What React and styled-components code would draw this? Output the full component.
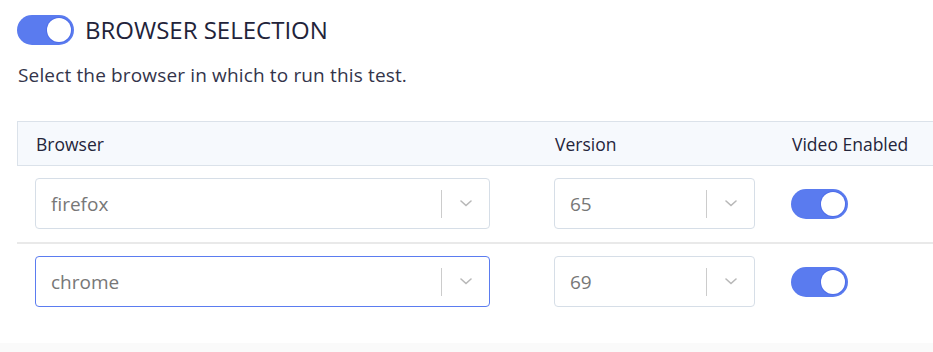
import React from "react";
import styled, { createGlobalStyle } from "styled-components";

const GlobalStyle = createGlobalStyle`
  html, body {
    margin: 0;
    padding: 0;
    background: #fff;
    font-family: "Open Sans", "Noto Sans", sans-serif;
  }
`;

const Page = styled.div`
  width: 933px;
  height: 352px;
  overflow: hidden;
  display: flex;
  flex-direction: column;
`;

const Content = styled.div`
  padding: 14px 0 0 17px;
  flex: 1;
`;

const TitleRow = styled.div`
  display: flex;
  align-items: center;
  gap: 11px;
  height: 32px;
`;

const Title = styled.h2`
  margin: 0;
  font-size: 24px;
  line-height: 32px;
  font-weight: 500;
  color: #22233a;
`;

const Subtitle = styled.p`
  margin: 16px 0 0 1px;
  font-size: 19px;
  line-height: 26px;
  letter-spacing: 0.15px;
  color: #33344a;
`;

const SwitchTrack = styled.div`
  width: 57px;
  height: 30px;
  border-radius: 15px;
  background: #5a7bef;
  display: flex;
  align-items: center;
  justify-content: ${(p) => (p.on ? "flex-end" : "flex-start")};
  padding: 0 3px;
  box-sizing: border-box;
  flex-shrink: 0;
`;

const SwitchKnob = styled.div`
  width: 24px;
  height: 24px;
  border-radius: 50%;
  background: #fff;
  box-shadow: 0 0 0 1px rgba(70, 100, 230, 0.6);
`;

const Table = styled.div`
  margin-top: 33px;
`;

const HeaderRow = styled.div`
  display: grid;
  grid-template-columns: 519px 237px 1fr;
  height: 43px;
  align-items: center;
  background: #f6f9fd;
  border: 1px solid #dbe2ea;
  border-right: none;
`;

const HeaderCell = styled.div`
  padding-left: 18px;
  font-size: 17.5px;
  color: #24253b;
`;

const Row = styled.div`
  display: grid;
  grid-template-columns: 519px 237px 1fr;
  align-items: center;
  padding: 12px 0 13px;
  border-bottom: ${(p) => (p.last ? "none" : "2px solid #e9e9e9")};
`;

const Cell = styled.div`
  padding-left: 18px;
  display: flex;
  align-items: center;
`;

const SelectBox = styled.div`
  width: ${(p) => p.width}px;
  height: 51px;
  box-sizing: border-box;
  border: 1px solid ${(p) => (p.focused ? "#5b7cf0" : "#d6dee7")};
  border-radius: 4px;
  background: #fff;
  display: flex;
  align-items: center;
`;

const SelectValue = styled.span`
  flex: 1;
  padding-left: 15px;
  font-size: 19px;
  color: #777777;
`;

const Divider = styled.span`
  width: 1px;
  height: 28px;
  background: #cccccc;
`;

const Chevron = styled.span`
  width: 47px;
  display: flex;
  justify-content: center;
  align-items: center;
`;

const BottomStrip = styled.div`
  height: 9px;
  background: #fafafa;
`;

const Switch = ({ on = true }) => (
  <SwitchTrack on={on}>
    <SwitchKnob />
  </SwitchTrack>
);

const Select = ({ value, width, focused }) => (
  <SelectBox width={width} focused={focused}>
    <SelectValue>{value}</SelectValue>
    <Divider />
    <Chevron>
      <svg width="14" height="9" viewBox="0 0 14 9">
        <path
          d="M2 2 L7 6.5 L12 2"
          fill="none"
          stroke="#b8b8b8"
          strokeWidth="1.6"
          strokeLinecap="round"
        />
      </svg>
    </Chevron>
  </SelectBox>
);

const rows = [
  { browser: "firefox", version: "65", focused: false },
  { browser: "chrome", version: "69", focused: true },
];

const App = () => {
  return (
    <Page>
      <GlobalStyle />
      <Content>
        <TitleRow>
          <Switch on />
          <Title>BROWSER SELECTION</Title>
        </TitleRow>
        <Subtitle>Select the browser in which to run this test.</Subtitle>
        <Table>
          <HeaderRow>
            <HeaderCell>Browser</HeaderCell>
            <HeaderCell>Version</HeaderCell>
            <HeaderCell>Video Enabled</HeaderCell>
          </HeaderRow>
          {rows.map((r, i) => (
            <Row key={r.browser} last={i === rows.length - 1}>
              <Cell>
                <Select value={r.browser} width={455} focused={r.focused} />
              </Cell>
              <Cell>
                <Select value={r.version} width={201} />
              </Cell>
              <Cell>
                <Switch on />
              </Cell>
            </Row>
          ))}
        </Table>
      </Content>
      <BottomStrip />
    </Page>
  );
};

export default App;
